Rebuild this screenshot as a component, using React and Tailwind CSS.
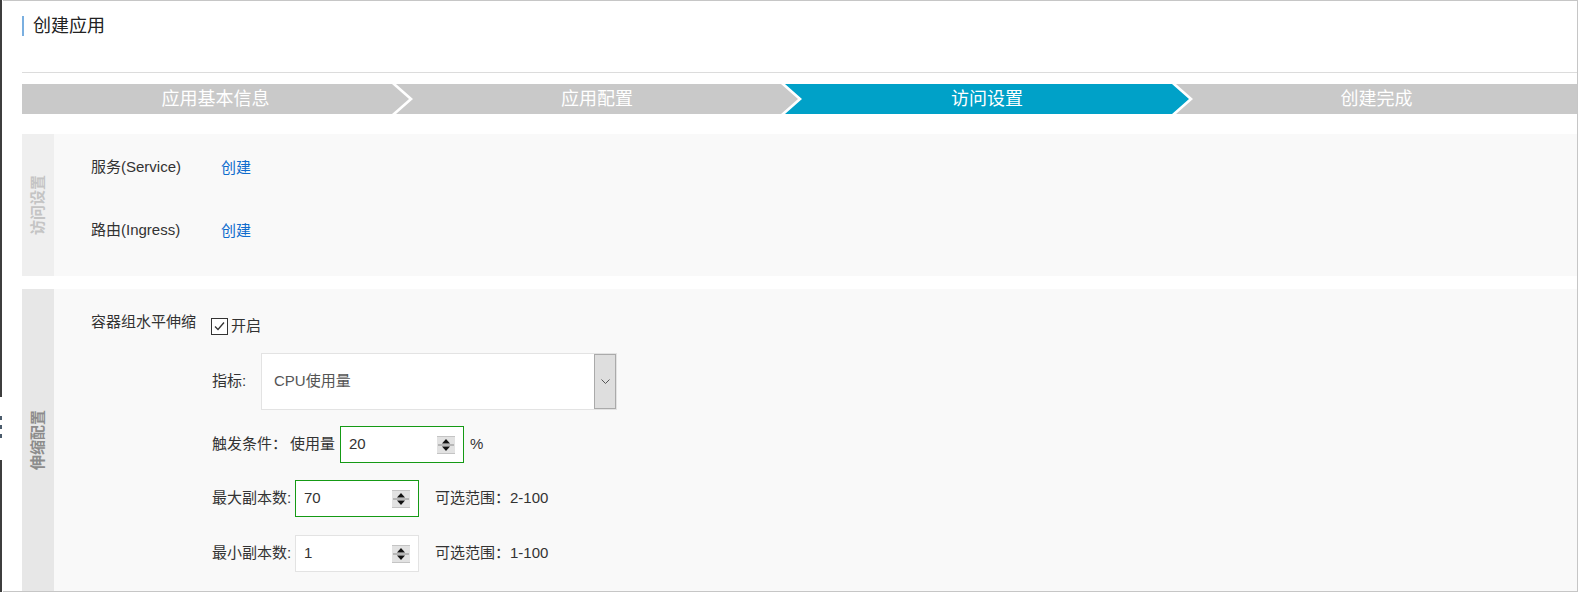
import React from "react";

const steps = [
  { label: "应用基本信息", cls: "w-[387px] bg-[#c9c9c9] [clip-path:polygon(0_0,calc(100%_-_17px)_0,100%_50%,calc(100%_-_17px)_100%,0_100%)]" },
  { label: "应用配置", cls: "w-[402px] -ml-[13px] bg-[#c9c9c9] [clip-path:polygon(0_0,calc(100%_-_17px)_0,100%_50%,calc(100%_-_17px)_100%,0_100%,17px_50%)]" },
  { label: "访问设置", cls: "w-[404px] -ml-[13px] bg-[#00a1c8] [clip-path:polygon(0_0,calc(100%_-_17px)_0,100%_50%,calc(100%_-_17px)_100%,0_100%,17px_50%)]" },
  { label: "创建完成", cls: "flex-1 -ml-[13px] bg-[#c9c9c9] [clip-path:polygon(0_0,100%_0,100%_100%,0_100%,17px_50%)]" },
];

const Spinner = () => (
  <svg width="18" height="18" viewBox="0 0 18 18" className="shrink-0">
    <rect x="0" y="0" width="18" height="18" fill="#e2e2e2" />
    <line x1="0" y1="0.5" x2="18" y2="0.5" stroke="#c4c4c4" />
    <line x1="0" y1="17.5" x2="18" y2="17.5" stroke="#c4c4c4" />
    <line x1="1" y1="9" x2="17" y2="9" stroke="#8a8a8a" />
    <polygon points="9,3 5,7.5 13,7.5" fill="#111" />
    <polygon points="5,10.5 13,10.5 9,15" fill="#111" />
  </svg>
);

const NumberInput = ({ value, active }) => (
  <div
    className={
      "w-[124px] h-[37px] bg-white flex items-center justify-between pl-[8px] pr-[8px] text-[15px] text-[#333] " +
      (active ? "border border-[#159a15]" : "border border-[#e3e3e3]")
    }
  >
    <span>{value}</span>
    <Spinner />
  </div>
);

const SideLabel = ({ text, bg, color }) => (
  <div className={"w-[32px] shrink-0 flex items-center justify-center " + bg}>
    <span
      className={
        "[writing-mode:vertical-rl] [text-orientation:sideways] rotate-180 text-[15px] font-bold " + color
      }
    >
      {text}
    </span>
  </div>
);

const App = () => {
  return (
    <div
      className="w-[1578px] h-[592px] bg-white flex overflow-hidden text-[#333]"
      style={{ fontFamily: '"Liberation Sans", "Noto Sans CJK SC", sans-serif' }}
    >
      {/* left edge */}
      <div className="w-[3px] h-[592px] shrink-0 flex flex-col">
        <div className="w-[2px] h-[397px] bg-[#3d3d3d]" />
        <div className="h-[19px]" />
        <div className="w-[2px] h-[4px] bg-[#4b5b6b]" />
        <div className="h-[5px]" />
        <div className="w-[2px] h-[4px] bg-[#4b5b6b]" />
        <div className="h-[5px]" />
        <div className="w-[2px] h-[4px] bg-[#4b5b6b]" />
        <div className="h-[22px]" />
        <div className="w-[2px] flex-1 bg-[#3d3d3d]" />
      </div>

      <div className="w-[1575px] h-[592px] shrink-0 border-t border-r border-b border-[#c6c6c6] pl-[19px] flex flex-col">
        {/* title */}
        <div className="h-[72px] shrink-0 border-b border-[#dcdcdc] pt-[15px] flex items-start gap-[9px]">
          <div className="w-[2px] h-[20px] bg-[#7aafe0]" />
          <span className="text-[18px] leading-[20px] text-[#222]">创建应用</span>
        </div>

        {/* steps */}
        <div className="mt-[11px] h-[30px] shrink-0 flex bg-white">
          {steps.map((s) => (
            <div
              key={s.label}
              className={"h-full shrink-0 flex items-center justify-center text-[18px] text-white " + s.cls}
            >
              {s.label}
            </div>
          ))}
        </div>

        {/* access settings */}
        <div className="mt-[20px] h-[142px] shrink-0 flex">
          <SideLabel text="访问设置" bg="bg-[#efefef]" color="text-[#c4c4c4]" />
          <div className="flex-1 bg-[#f9f9f9] pl-[37px] pt-[23px] flex flex-col gap-[43px]">
            <div className="flex items-center h-[20px] text-[15px]">
              <span className="w-[130px]">服务(Service)</span>
              <span className="text-[#0f6ccd] mt-[3px]">创建</span>
            </div>
            <div className="flex items-center h-[20px] text-[15px]">
              <span className="w-[130px]">路由(Ingress)</span>
              <span className="text-[#0f6ccd] mt-[3px]">创建</span>
            </div>
          </div>
        </div>

        {/* scaling */}
        <div className="mt-[13px] flex-1 flex min-h-0">
          <SideLabel text="伸缩配置" bg="bg-[#e7e7e7]" color="text-[#8c8c8c]" />
          <div className="flex-1 bg-[#f9f9f9] pl-[37px] pt-[23px] flex flex-col">
            <div className="flex items-start text-[15px]">
              <span className="w-[120px] leading-[20px]">容器组水平伸缩</span>
              <div className="flex items-center gap-[3px] mt-[4px]">
                <div className="w-[17px] h-[17px] border border-[#333] bg-white flex items-center justify-center">
                  <svg width="13" height="13" viewBox="0 0 13 13">
                    <path d="M2 6.5 L5 9.5 L11 2.5" fill="none" stroke="#333" strokeWidth="1.3" />
                  </svg>
                </div>
                <span className="leading-[20px]">开启</span>
              </div>
            </div>

            <div className="ml-[121px] flex flex-col text-[15px]">
              <div className="mt-[17px] flex items-center">
                <span className="w-[49px]">指标:</span>
                <div className="w-[356px] h-[57px] bg-white border border-[#e3e3e3] flex items-center justify-between pl-[12px]">
                  <span className="text-[#555]">CPU使用量</span>
                  <div className="w-[22px] h-[55px] bg-[#dedede] border border-[#aaaaaa] flex items-center justify-center">
                    <svg width="9" height="6" viewBox="0 0 9 6">
                      <path d="M0.5 0.5 L4.5 4.5 L8.5 0.5" fill="none" stroke="#555" strokeWidth="1" />
                    </svg>
                  </div>
                </div>
              </div>

              <div className="mt-[16px] flex items-center">
                <span className="w-[78px]">触发条件：</span>
                <span className="w-[50px]">使用量</span>
                <NumberInput value="20" active />
                <span className="ml-[6px]">%</span>
              </div>

              <div className="mt-[17px] flex items-center">
                <span className="w-[83px]">最大副本数:</span>
                <NumberInput value="70" active />
                <span className="ml-[16px]">可选范围：2-100</span>
              </div>

              <div className="mt-[18px] flex items-center">
                <span className="w-[83px]">最小副本数:</span>
                <NumberInput value="1" />
                <span className="ml-[16px]">可选范围：1-100</span>
              </div>
            </div>
          </div>
        </div>
      </div>
    </div>
  );
};

export default App;
